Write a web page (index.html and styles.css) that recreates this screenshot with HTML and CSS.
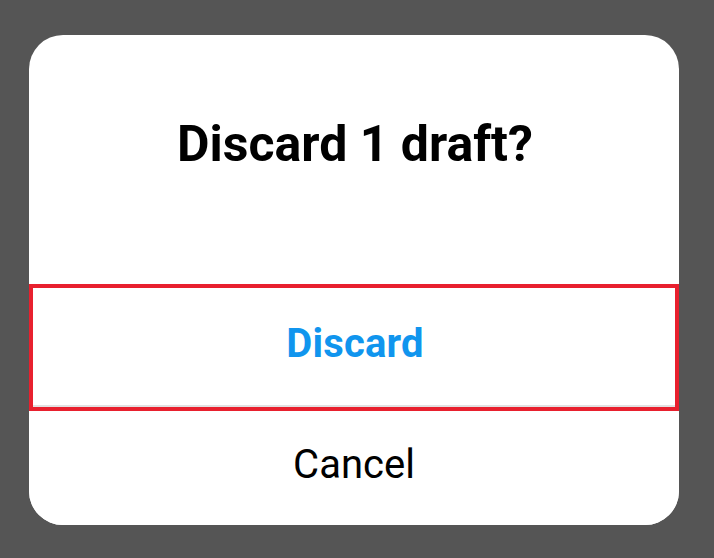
FILE: index.html
```html
<!DOCTYPE html>
<html lang="en">
<head>
    <meta charset="UTF-8">
    <meta name="viewport" content="width=device-width, initial-scale=1.0">
    <title>Discard draft</title>
    <link rel="stylesheet" href="styles.css">
</head>
<body>
    <div class="dialog">
        <h2 class="dialog-title">Discard 1 draft?</h2>
        <button class="action action-discard">Discard</button>
        <button class="action action-cancel">Cancel</button>
    </div>
</body>
</html>
```

FILE: styles.css
```css
* {
    box-sizing: border-box;
    margin: 0;
    padding: 0;
}

html, body {
    height: 100%;
}

body {
    font-family: Roboto, 'Liberation Sans', sans-serif;
    background: #555555;
    padding: 35px 35px 33px 29px;
    overflow: hidden;
}

.dialog {
    width: 650px;
    height: 490px;
    background: white;
    border-radius: 34px;
    display: flex;
    flex-direction: column;
    overflow: hidden;
}

.dialog-title {
    height: 249px;
    padding-top: 82px;
    padding-left: 2px;
    font-size: 50px;
    line-height: 54px;
    font-weight: 700;
    color: #000000;
    text-align: center;
}

.action {
    width: 100%;
    background: white;
    font-family: inherit;
    font-size: 40px;
    border: none;
    text-align: center;
}

.action-discard {
    height: 127px;
    padding-bottom: 8px;
    padding-left: 2px;
    border: 4px solid #e8202e;
    letter-spacing: 0.2px;
    font-weight: 700;
    color: #1095ee;
    box-shadow: inset 0 -2px 0 #e2e2e2;
}

.action-cancel {
    flex: 1;
    padding-bottom: 8px;
    font-weight: 400;
    color: #000000;
}
```
